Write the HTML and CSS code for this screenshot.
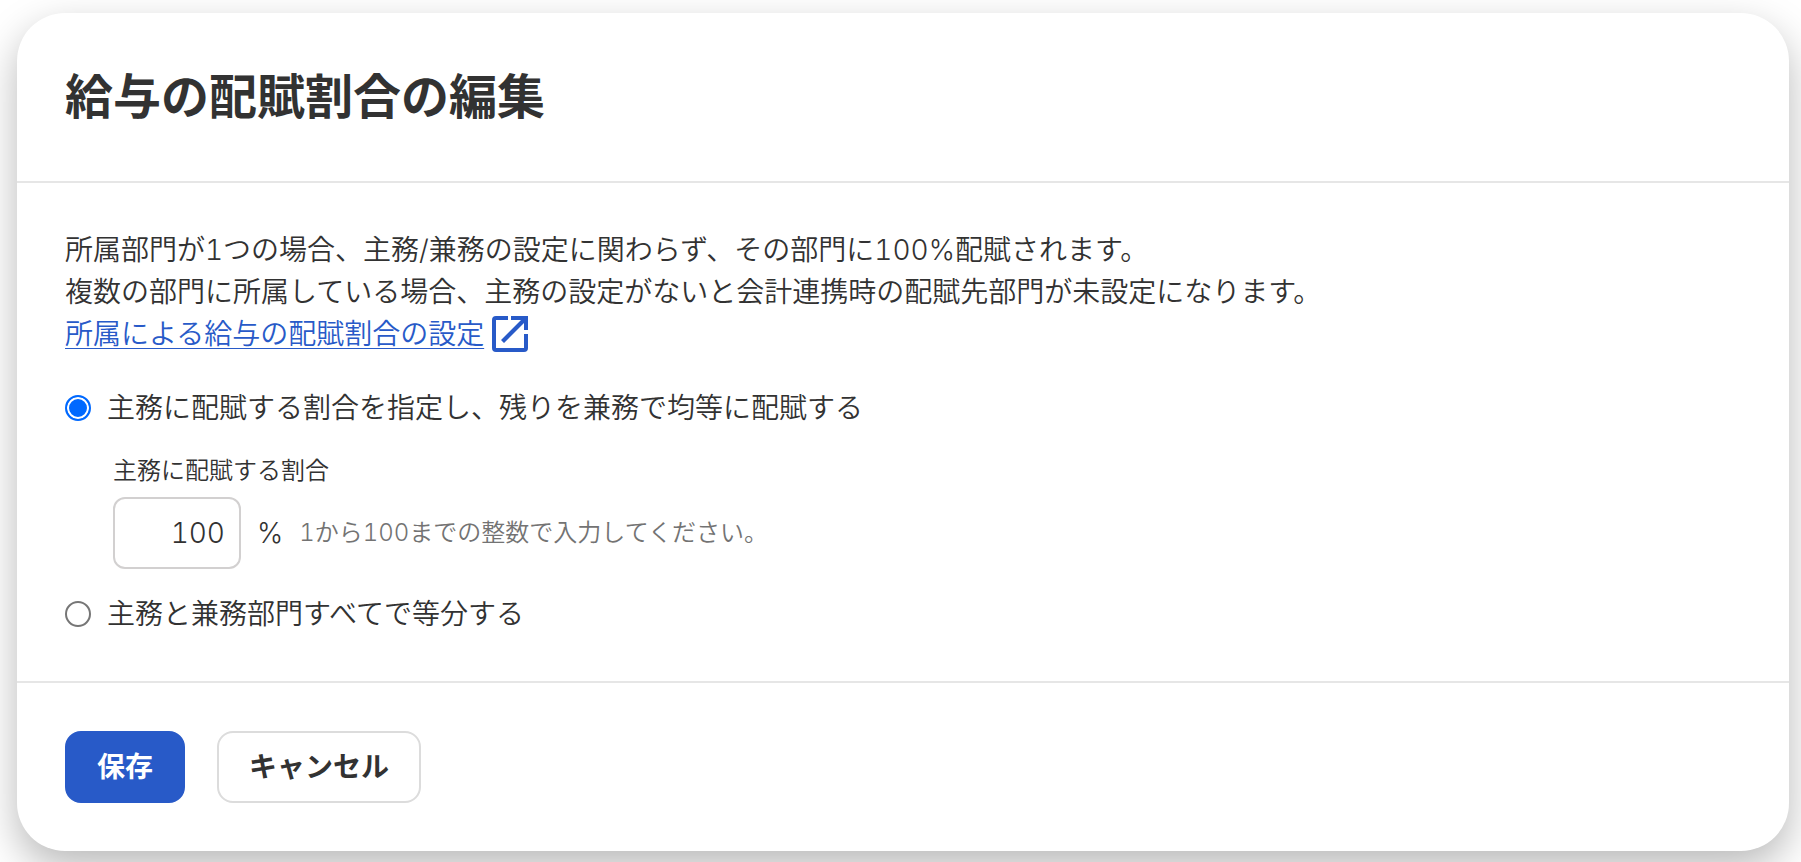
FILE: index.html
```html
<!DOCTYPE html>
<html lang="ja">
<head>
    <meta charset="UTF-8">
    <meta name="viewport" content="width=device-width, initial-scale=1.0">
    <title>給与の配賦割合の編集</title>
    <link rel="stylesheet" href="styles.css">
</head>
<body>
    <form class="dialog" role="dialog" aria-labelledby="dialogTitle">
        <header class="dialog-header">
            <h1 id="dialogTitle">給与の配賦割合の編集</h1>
        </header>

        <div class="dialog-body">
            <p class="description">
                所属部門が1つの場合、主務/兼務の設定に関わらず、その部門に100%配賦されます。<br>
                複数の部門に所属している場合、主務の設定がないと会計連携時の配賦先部門が未設定になります。
            </p>
            <a class="help-link" href="#">
                <span class="help-text">所属による給与の配賦割合の設定</span>
                <svg class="help-icon" viewBox="0 0 36 36" aria-hidden="true">
                    <path fill="currentColor" d="M4 0H16V4H4V32H32V18H36V32Q36 36 32 36H4Q0 36 0 32V4Q0 0 4 0Z"/>
                    <path fill="currentColor" d="M19 0H36V14H32V7L12 27L9 24L29 4H19Z"/>
                </svg>
            </a>

            <div class="option">
                <input type="radio" id="ratio" name="method" checked>
                <label for="ratio">主務に配賦する割合を指定し、残りを兼務で均等に配賦する</label>
            </div>
            <div class="sub-field">
                <label for="percent">主務に配賦する割合</label>
                <div class="percent-row">
                    <input type="text" id="percent" name="percent" inputmode="numeric" value="100" aria-describedby="percentHint">
                    <span class="unit">%</span>
                    <span class="hint" id="percentHint">1から100までの整数で入力してください。</span>
                </div>
            </div>
            <div class="option">
                <input type="radio" id="equal" name="method">
                <label for="equal">主務と兼務部門すべてで等分する</label>
            </div>
        </div>

        <footer class="dialog-footer">
            <button type="submit" class="btn btn-primary">保存</button>
            <button type="button" class="btn">キャンセル</button>
        </footer>
    </form>
</body>
</html>
```

FILE: styles.css
```css
* {
    margin: 0;
    padding: 0;
    box-sizing: border-box;
}

body {
    padding: 13px 12px 11px 17px;
    background-color: #fff;
    color: #323232;
    font-family: Inter, "Noto Sans CJK JP", sans-serif;
    font-size: 28px;
    font-weight: 350;
    font-variant-numeric: tabular-nums;
    line-height: 42px;
    overflow-x: hidden;
}

input,
button {
    font: inherit;
    font-variant-numeric: inherit;
    color: inherit;
}

.dialog {
    background-color: #fff;
    border-radius: 48px;
    box-shadow: 0 16px 40px rgba(0, 0, 0, 0.28);
}

.dialog-header {
    padding: 48px;
    border-bottom: 2px solid #e6e6e6;
}

h1 {
    font-size: 48px;
    line-height: 72px;
    font-weight: bold;
}

.dialog-body {
    padding: 46px 48px;
}

.help-link {
    display: flex;
    align-items: center;
    gap: 8px;
    width: fit-content;
    color: #285ac8;
    text-decoration: none;
}

.help-text {
    text-decoration: underline;
    text-decoration-thickness: 1px;
    text-underline-offset: 4px;
}

.help-icon {
    width: 36px;
    height: 36px;
}

.option {
    display: flex;
    align-items: center;
    gap: 16px;
    margin-top: 32px;
}

.option input {
    appearance: none;
    width: 26px;
    height: 26px;
    border: 2px solid #767676;
    border-radius: 50%;
    background-color: #fff;
}

.option input:checked {
    border-color: #0069ff;
    background-color: #0069ff;
    box-shadow: inset 0 0 0 2px #fff;
}

.sub-field {
    margin: 24px 0 0 48px;
    font-size: 24px;
    line-height: 36px;
}

.sub-field + .option {
    margin-top: 24px;
}

.percent-row {
    display: flex;
    align-items: center;
    gap: 16px;
    margin-top: 8px;
}

.percent-row input {
    width: 128px;
    height: 72px;
    padding: 0 14px;
    border: 2px solid #d2d0d0;
    border-radius: 12px;
    font-size: 28px;
    text-align: right;
}

.unit {
    font-size: 28px;
}

.hint {
    color: #737373;
}

.dialog-footer {
    display: flex;
    gap: 32px;
    padding: 48px;
    border-top: 2px solid #e6e6e6;
}

.btn {
    height: 72px;
    padding: 0 30px;
    border: 2px solid #dcdcdc;
    border-radius: 16px;
    background-color: #fff;
    font-weight: bold;
    cursor: pointer;
}

.btn-primary {
    border-color: #285ac8;
    background-color: #285ac8;
    color: #fff;
}
```
